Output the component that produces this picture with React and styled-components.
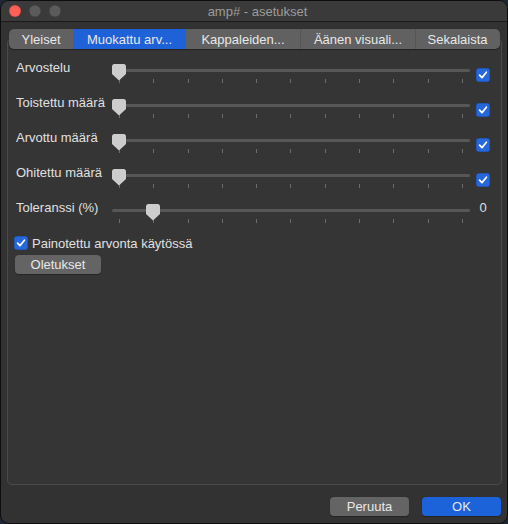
import React from "react";
import styled, { createGlobalStyle } from "styled-components";

const Global = createGlobalStyle`
  html, body { margin: 0; padding: 0; background: #1f2736; }
  body { font-family: "Liberation Sans", Arial, sans-serif; -webkit-font-smoothing: antialiased; }
  * { box-sizing: border-box; }
`;

const Window = styled.div`
  width: 508px;
  height: 524px;
  display: flex;
  flex-direction: column;
  background: #323232;
  border: 1px solid #0d0d0d;
  border-radius: 9px;
  overflow: hidden;
`;

const TitleBar = styled.div`
  height: 21px;
  flex: none;
  display: flex;
  align-items: center;
  padding-left: 8px;
  background: #3a3a3a;
  border-bottom: 1px solid #1a1a1a;
`;

const Lights = styled.div`
  display: flex;
  gap: 8px;
`;

const Light = styled.span`
  width: 12px;
  height: 12px;
  border-radius: 50%;
  background: ${(p) => p.$color};
  box-shadow: inset 0 0 0 0.5px rgba(0, 0, 0, 0.25);
`;

const Title = styled.div`
  flex: 1;
  text-align: center;
  margin-right: 53px;
  font-size: 13px;
  color: #9c9c9c;
  line-height: 21px;
`;

const Body = styled.div`
  flex: 1;
  display: flex;
  flex-direction: column;
  padding: 7px 5px 6px 6px;
  min-height: 0;
`;

const TabBar = styled.div`
  display: flex;
  height: 20px;
  margin: 0 2px;
  border-radius: 5px;
  overflow: hidden;
  background: #616161;
  position: relative;
  z-index: 1;
  box-shadow: 0 0.5px 1px rgba(0, 0, 0, 0.35);
`;

const Tab = styled.div`
  width: ${(p) => p.$w}px;
  flex: none;
  display: flex;
  align-items: center;
  justify-content: center;
  font-size: 13px;
  color: #e8e8e8;
  white-space: nowrap;
  background: ${(p) => (p.$active ? "#1f62d7" : "transparent")};
  border-left: ${(p) => (p.$sep ? "1px solid #555555" : "none")};
`;

const Panel = styled.div`
  flex: 1;
  margin-top: -11px;
  border: 1px solid #4b4b4b;
  border-radius: 5px;
  background: #353535;
  padding: 21px 11px 0 8px;
  display: flex;
  flex-direction: column;
`;

const Row = styled.div`
  display: flex;
  align-items: flex-start;
  height: 35px;
`;

const Label = styled.div`
  width: 96px;
  flex: none;
  font-size: 13px;
  line-height: 16px;
  color: #e0e0e0;
  white-space: nowrap;
`;

const SliderBox = styled.div`
  position: relative;
  flex: 1;
  margin-top: 4px;
  height: 20px;
`;

const Track = styled.div`
  margin-top: 5px;
  height: 3px;
  border-radius: 2px;
  background: #575757;
`;

const Ticks = styled.div`
  margin-top: 7px;
  padding: 0 7px;
  display: flex;
  justify-content: space-between;
`;

const Tick = styled.span`
  width: 1px;
  height: 4px;
  background: #6c6c6c;
`;

const ThumbWrap = styled.div`
  position: absolute;
  top: 0;
  width: 14px;
  height: 17px;
`;

const Trailing = styled.div`
  width: 14px;
  flex: none;
  margin-left: 6px;
  display: flex;
  justify-content: center;
  margin-top: ${(p) => (p.$text ? 0 : 8)}px;
  font-size: 13px;
  line-height: 16px;
  color: #e0e0e0;
`;

const Box = styled.span`
  width: 14px;
  height: 14px;
  flex: none;
  border-radius: 3px;
  background: #2667dc;
  display: flex;
  align-items: center;
  justify-content: center;
  box-shadow: inset 0 0 0 0.5px rgba(0, 0, 0, 0.3);
`;

const CheckRow = styled.div`
  display: flex;
  align-items: center;
  gap: 4px;
  margin: 1px 0 0 -2px;
  height: 14px;
  font-size: 13px;
  color: #e0e0e0;
`;

const Button = styled.div`
  width: ${(p) => p.$w}px;
  height: 19px;
  flex: none;
  display: flex;
  align-items: center;
  justify-content: center;
  border-radius: 4px;
  font-size: 13px;
  color: #e8e8e8;
  background: ${(p) => (p.$primary ? "#1c63d9" : "#646464")};
  box-shadow: 0 0.5px 1px rgba(0, 0, 0, 0.3);
`;

const DefaultsButton = styled(Button)`
  margin: 5px 0 0 -1px;
`;

const Footer = styled.div`
  display: flex;
  justify-content: flex-end;
  gap: 13px;
  margin-top: 12px;
  padding-right: 1px;
  height: 20px;
`;

const Check = () => (
  <Box>
    <svg width="10" height="10" viewBox="0 0 10 10">
      <path d="M1.6 5.2 L4 7.6 L8.4 2.2" fill="none" stroke="#fff" strokeWidth="1.7" strokeLinecap="round" strokeLinejoin="round" />
    </svg>
  </Box>
);

const Thumb = () => (
  <svg width="14" height="17" viewBox="0 0 14 17">
    <path d="M2.5 0 H11.5 Q14 0 14 2.5 V10 L7 16.5 L0 10 V2.5 Q0 0 2.5 0 Z" fill="#cdcdcd" />
  </svg>
);

const Slider = ({ value }) => (
  <SliderBox>
    <Track />
    <Ticks>
      {Array.from({ length: 11 }).map((_, i) => (
        <Tick key={i} />
      ))}
    </Ticks>
    <ThumbWrap style={{ left: `calc(${value} * (100% - 14px))` }}>
      <Thumb />
    </ThumbWrap>
  </SliderBox>
);

const tabs = [
  { t: "Yleiset", w: 64 },
  { t: "Muokattu arv...", w: 113, active: true },
  { t: "Kappaleiden...", w: 114 },
  { t: "Äänen visuali...", w: 115, sep: true },
  { t: "Sekalaista", w: 84, sep: true },
];

const rows = [
  { l: "Arvostelu", v: 0 },
  { l: "Toistettu määrä", v: 0 },
  { l: "Arvottu määrä", v: 0 },
  { l: "Ohitettu määrä", v: 0 },
  { l: "Toleranssi (%)", v: 0.1, text: "0" },
];

export default function App() {
  return (
    <>
      <Global />
      <Window>
        <TitleBar>
          <Lights>
            <Light $color="#fe5f57" />
            <Light $color="#5b5b5b" />
            <Light $color="#5b5b5b" />
          </Lights>
          <Title>amp# - asetukset</Title>
        </TitleBar>
        <Body>
          <TabBar>
            {tabs.map((t) => (
              <Tab key={t.t} $w={t.w} $active={t.active} $sep={t.sep}>
                {t.t}
              </Tab>
            ))}
          </TabBar>
          <Panel>
            {rows.map((r) => (
              <Row key={r.l}>
                <Label>{r.l}</Label>
                <Slider value={r.v} />
                <Trailing $text={!!r.text}>{r.text ? r.text : <Check />}</Trailing>
              </Row>
            ))}
            <CheckRow>
              <Check />
              <span>Painotettu arvonta käytössä</span>
            </CheckRow>
            <DefaultsButton $w={86}>Oletukset</DefaultsButton>
          </Panel>
          <Footer>
            <Button $w={79}>Peruuta</Button>
            <Button $w={79} $primary>
              OK
            </Button>
          </Footer>
        </Body>
      </Window>
    </>
  );
}
